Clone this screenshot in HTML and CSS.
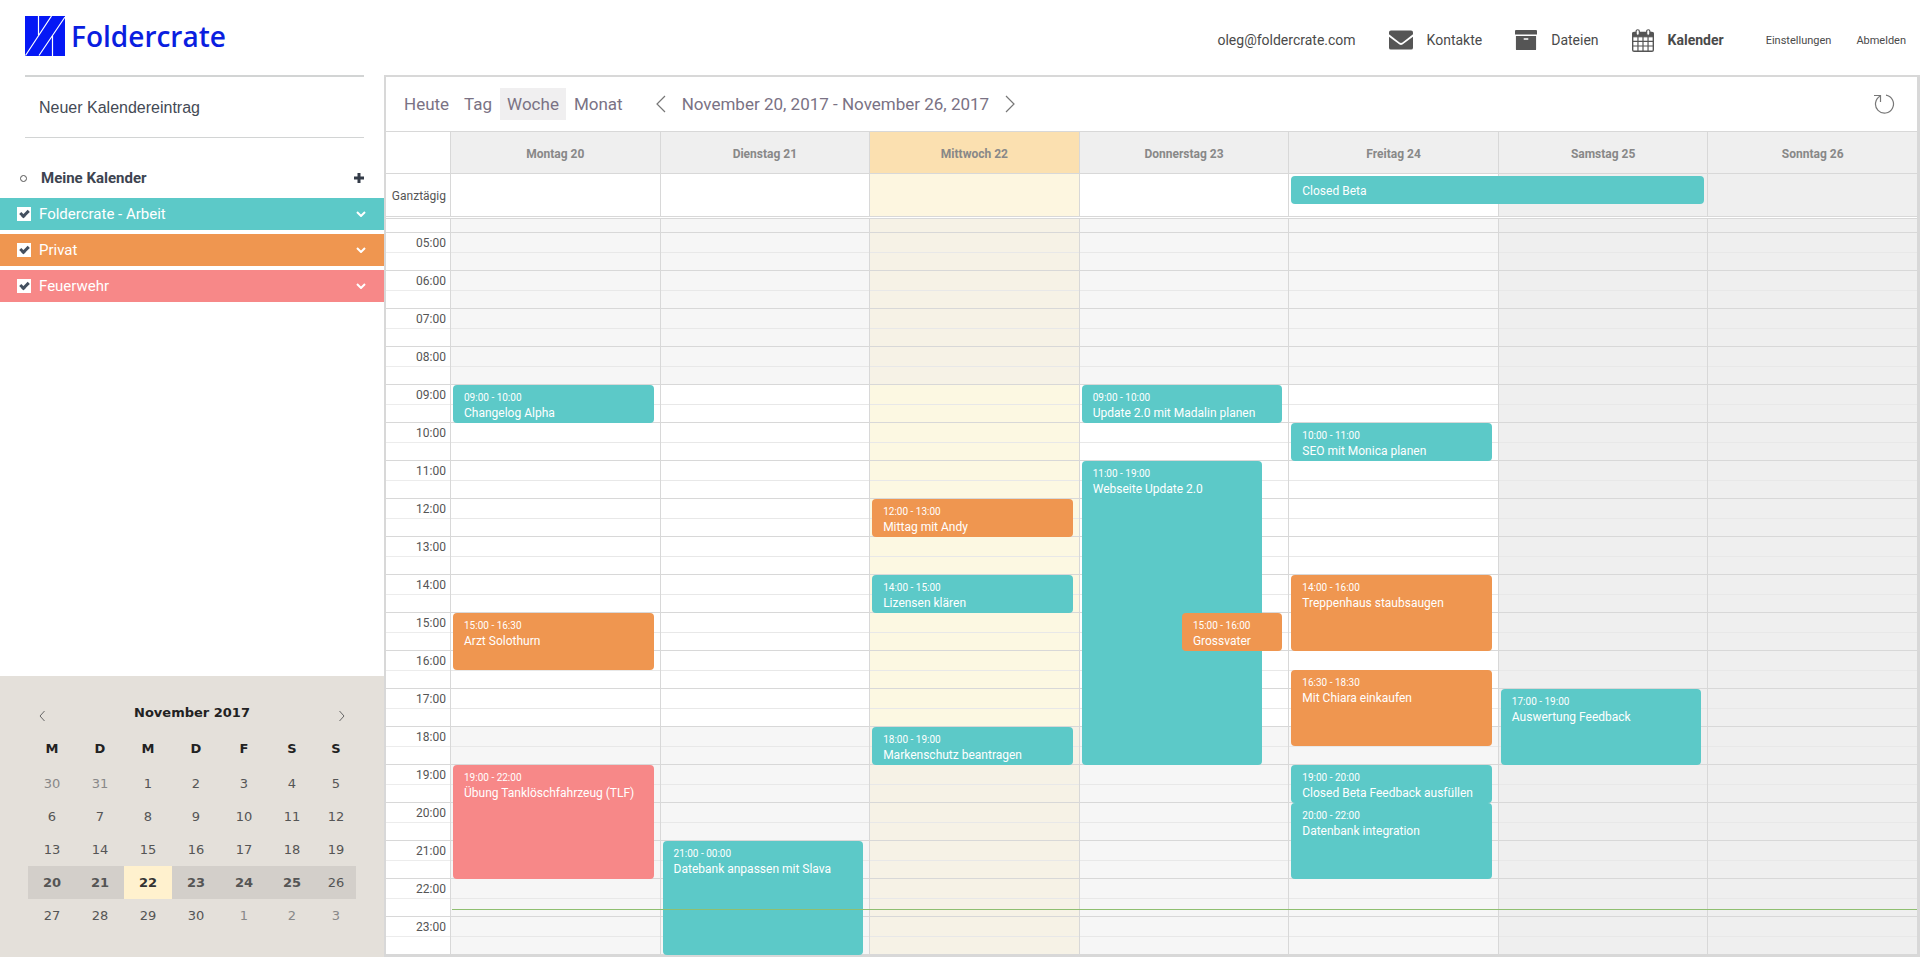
FILE: index.html
```
<!DOCTYPE html>
<html lang="de">
<head>
    <meta charset="UTF-8">
    <meta name="viewport" content="width=device-width, initial-scale=1.0">
    <title>Foldercrate - Kalender</title>
    <link rel="stylesheet" href="styles.css">
</head>
<body>
    <header class="topbar">
        <a class="logo" href="#">
            <svg width="40" height="40" viewBox="0 0 40 40">
                <rect width="40" height="40" fill="#0518f5"/>
                <path d="M13.5 0V19M27.5 20V40M0.500 39.500L26.500 0M14 39.500L40 1" stroke="#fff" stroke-width="1.200" fill="none"/>
            </svg>
            <span>Foldercrate</span>
        </a>
        <nav class="topnav">
            <span class="account">oleg@foldercrate.com</span>
            <a class="nav-link" href="#">
                <svg width="24" height="20" viewBox="0 0 25 20" fill="#555">
                    <path d="M2 0H23Q25 0 25 2V4L14 12.500Q12.500 13.500 11 12.500L0 4V2Q0 0 2 0Z"/>
                    <path d="M0 6.500L11 14.800Q12.500 15.800 14 14.800L25 6.500V18Q25 20 23 20H2Q0 20 0 18Z"/>
                </svg>
                Kontakte
            </a>
            <a class="nav-link" href="#">
                <svg width="22" height="22" viewBox="0 0 24 22" fill="#555">
                    <path d="M1 0H23Q24 0 24 1V5H0V1Q0 0 1 0Z"/>
                    <path fill-rule="evenodd" d="M1 6.500H23V21Q23 22 22 22H2Q1 22 1 21ZM9.500 9V10.800H14.500V9Z"/>
                </svg>
                Dateien
            </a>
            <a class="nav-link active" href="#">
                <svg width="22" height="25" viewBox="0 0 24 25" fill="none" stroke="#555">
                    <rect x="0.750" y="3.750" width="22.500" height="20.500" rx="1.500" stroke-width="1.500"/>
                    <path d="M1 4H23V8.500H1Z" fill="#555"/>
                    <path d="M1 13.500H23M1 18.500H23M6.500 8V24M12 8V24M17.500 8V24" stroke-width="1.300"/>
                    <rect x="4.500" y="0.750" width="3.500" height="6" rx="1.700" fill="#fff" stroke-width="1.300"/>
                    <rect x="16" y="0.750" width="3.500" height="6" rx="1.700" fill="#fff" stroke-width="1.300"/>
                </svg>
                Kalender
            </a>
            <a class="nav-small" href="#">Einstellungen</a>
            <a class="nav-small" href="#">Abmelden</a>
        </nav>
    </header>

    <div class="layout">
        <aside class="sidebar">
            <div class="new-entry">
                <button class="new-btn" type="button">Neuer Kalendereintrag</button>
            </div>
            <div class="group-head">
                <span class="group-dot"></span>
                <h2>Meine Kalender</h2>
                <button class="add-btn" type="button" aria-label="Kalender hinzufügen">
                    <svg width="10" height="10" viewBox="0 0 10 10" stroke="#333b48" stroke-width="3"><path d="M5 0V10M0 5H10"/></svg>
                </button>
            </div>
            <ul class="calendars">
                <li class="teal">
                    <label><input type="checkbox" checked>Foldercrate - Arbeit</label>
                    <svg width="10" height="6" viewBox="0 0 10 6"><path d="M1 1L5 5L9 1"/></svg>
                </li>
                <li class="orange">
                    <label><input type="checkbox" checked>Privat</label>
                    <svg width="10" height="6" viewBox="0 0 10 6"><path d="M1 1L5 5L9 1"/></svg>
                </li>
                <li class="red">
                    <label><input type="checkbox" checked>Feuerwehr</label>
                    <svg width="10" height="6" viewBox="0 0 10 6"><path d="M1 1L5 5L9 1"/></svg>
                </li>
            </ul>

            <div class="minical">
                <div class="minical-head">
                    <button type="button" aria-label="Voriger Monat">
                        <svg width="6" height="12" viewBox="0 0 6 12"><path d="M5.500 1L1 6L5.500 11"/></svg>
                    </button>
                    <span>November 2017</span>
                    <button type="button" aria-label="Nächster Monat">
                        <svg width="6" height="12" viewBox="0 0 6 12"><path d="M0.500 1L5 6L0.500 11"/></svg>
                    </button>
                </div>
                <table>
                    <thead>
                        <tr><th>M</th><th>D</th><th>M</th><th>D</th><th>F</th><th>S</th><th>S</th></tr>
                    </thead>
                    <tbody>
                        <tr><td class="other">30</td><td class="other">31</td><td>1</td><td>2</td><td>3</td><td>4</td><td>5</td></tr>
                        <tr><td>6</td><td>7</td><td>8</td><td>9</td><td>10</td><td>11</td><td>12</td></tr>
                        <tr><td>13</td><td>14</td><td>15</td><td>16</td><td>17</td><td>18</td><td>19</td></tr>
                        <tr class="current"><td class="busy">20</td><td class="busy">21</td><td class="today">22</td><td class="busy">23</td><td class="busy">24</td><td class="busy">25</td><td>26</td></tr>
                        <tr><td>27</td><td>28</td><td>29</td><td>30</td><td class="other">1</td><td class="other">2</td><td class="other">3</td></tr>
                    </tbody>
                </table>
            </div>
        </aside>

        <main class="calendar">
            <div class="toolbar">
                <div class="views">
                    <button type="button">Heute</button>
                    <button type="button">Tag</button>
                    <button type="button" class="selected">Woche</button>
                    <button type="button">Monat</button>
                </div>
                <div class="range">
                    <button type="button" aria-label="Vorige Woche">
                        <svg width="10" height="18" viewBox="0 0 10 18"><path d="M9 1L1 9L9 17"/></svg>
                    </button>
                    <span>November 20, 2017 - November 26, 2017</span>
                    <button type="button" aria-label="Nächste Woche">
                        <svg width="10" height="18" viewBox="0 0 10 18"><path d="M1 1L9 9L1 17"/></svg>
                    </button>
                </div>
                <button type="button" class="reload" aria-label="Aktualisieren">
                    <svg width="22" height="20" viewBox="0 0 22 20"><path d="M1 1.500H7.500V8M7.500 2A9 9 0 1 0 13 1.200"/></svg>
                </button>
            </div>

            <div class="week-row day-names">
                <div class="gutter"></div>
                <div class="day">Montag 20</div>
                <div class="day">Dienstag 21</div>
                <div class="day today">Mittwoch 22</div>
                <div class="day">Donnerstag 23</div>
                <div class="day">Freitag 24</div>
                <div class="day">Samstag 25</div>
                <div class="day">Sonntag 26</div>
            </div>

            <div class="week-row all-day">
                <div class="gutter">Ganztägig</div>
                <div class="day"></div>
                <div class="day"></div>
                <div class="day today"></div>
                <div class="day"></div>
                <div class="day"><div class="event span-two teal">Closed Beta</div></div>
                <div class="day weekend"></div>
                <div class="day weekend"></div>
            </div>

            <div class="week-row hours">
                <div class="gutter">
                    <span>05:00</span><span>06:00</span><span>07:00</span><span>08:00</span><span>09:00</span>
                    <span>10:00</span><span>11:00</span><span>12:00</span><span>13:00</span><span>14:00</span>
                    <span>15:00</span><span>16:00</span><span>17:00</span><span>18:00</span><span>19:00</span>
                    <span>20:00</span><span>21:00</span><span>22:00</span><span>23:00</span>
                </div>
                <!-- grid rows are half hours, row 1 starts at 05:00 -->
                <div class="day">
                    <div class="event teal" style="grid-row: 9 / 11"><time>09:00 - 10:00</time>Changelog Alpha</div>
                    <div class="event orange" style="grid-row: 21 / 24"><time>15:00 - 16:30</time>Arzt Solothurn</div>
                    <div class="event red" style="grid-row: 29 / 35"><time>19:00 - 22:00</time>Übung Tanklöschfahrzeug (TLF)</div>
                </div>
                <div class="day">
                    <div class="event teal" style="grid-row: 33 / 39"><time>21:00 - 00:00</time>Datebank anpassen mit Slava</div>
                </div>
                <div class="day today">
                    <div class="event orange" style="grid-row: 15 / 17"><time>12:00 - 13:00</time>Mittag mit Andy</div>
                    <div class="event teal" style="grid-row: 19 / 21"><time>14:00 - 15:00</time>Lizensen klären</div>
                    <div class="event teal" style="grid-row: 27 / 29"><time>18:00 - 19:00</time>Markenschutz beantragen</div>
                </div>
                <div class="day">
                    <div class="event teal" style="grid-row: 9 / 11"><time>09:00 - 10:00</time>Update 2.0 mit Madalin planen</div>
                    <div class="event teal behind" style="grid-row: 13 / 29"><time>11:00 - 19:00</time>Webseite Update 2.0</div>
                    <div class="event orange front" style="grid-row: 21 / 23"><time>15:00 - 16:00</time>Grossvater</div>
                </div>
                <div class="day">
                    <div class="event teal" style="grid-row: 11 / 13"><time>10:00 - 11:00</time>SEO mit Monica planen</div>
                    <div class="event orange" style="grid-row: 19 / 23"><time>14:00 - 16:00</time>Treppenhaus staubsaugen</div>
                    <div class="event orange" style="grid-row: 24 / 28"><time>16:30 - 18:30</time>Mit Chiara einkaufen</div>
                    <div class="event teal" style="grid-row: 29 / 31"><time>19:00 - 20:00</time>Closed Beta Feedback ausfüllen</div>
                    <div class="event teal" style="grid-row: 31 / 35"><time>20:00 - 22:00</time>Datenbank integration</div>
                </div>
                <div class="day weekend">
                    <div class="event teal" style="grid-row: 25 / 29"><time>17:00 - 19:00</time>Auswertung Feedback</div>
                </div>
                <div class="day weekend"></div>
                <div class="now-line"></div>
            </div>
        </main>
    </div>
</body>
</html>
```

FILE: styles.css
```
*,
*::before {
    box-sizing: border-box;
    margin: 0;
    padding: 0;
}

body {
    font-family: Roboto, sans-serif;
    font-size: 14px;
    color: #3d4450;
    background-color: #fff;
    min-height: 100vh;
    display: flex;
    flex-direction: column;
}

a {
    color: inherit;
    text-decoration: none;
}

button {
    font: inherit;
    color: inherit;
    background: none;
    border: none;
    cursor: pointer;
}

svg {
    display: block;
    flex: none;
}

.teal {
    background-color: #5cc9c8;
}

.orange {
    background-color: #ef9650;
}

.red {
    background-color: #f78888;
}

/* Top bar */

.topbar {
    height: 75px;
    display: flex;
    justify-content: space-between;
    padding: 16px 14px 0 25px;
}

.logo {
    display: flex;
    align-items: center;
    gap: 6px;
    height: 40px;
    font-family: "Open Sans", "Noto Sans", sans-serif;
    font-size: 28px;
    font-weight: 600;
    color: #0a1ee0;
}

.topnav {
    display: flex;
    align-items: center;
    height: 48px;
    color: #4a4a4a;
}

.account {
    margin-right: 33px;
}

.nav-link {
    display: flex;
    align-items: center;
    gap: 14px;
    margin-right: 33px;
}

.nav-link.active {
    font-weight: 700;
    margin-right: 42px;
}

.nav-small {
    font-size: 11px;
    margin-right: 25px;
}

.nav-small:last-child {
    margin-right: 0;
}

/* Sidebar */

.layout {
    flex: 1;
    display: flex;
}

.sidebar {
    flex: 0 0 384px;
    display: flex;
    flex-direction: column;
}

.new-entry {
    margin: 0 20px 0 25px;
    border-top: 2px solid #d2d4d4;
    border-bottom: 1px solid #d2d4d4;
    height: 63px;
    display: flex;
    align-items: center;
}

.new-btn {
    padding: 2px 0 0 14px;
    font-family: "Liberation Sans", sans-serif;
    font-size: 16px;
    color: #444a55;
}

.group-head {
    display: flex;
    align-items: center;
    height: 32px;
    margin: 24px 20px 4px 20px;
}

.group-head h2 {
    font-size: 15px;
    font-weight: 700;
    flex: 1;
}

.group-dot {
    width: 7px;
    height: 7px;
    border: 1px solid #555;
    border-radius: 50%;
    margin-right: 14px;
}

.calendars {
    list-style: none;
    display: flex;
    flex-direction: column;
    gap: 4px;
}

.calendars li {
    display: flex;
    align-items: center;
    justify-content: space-between;
    height: 32px;
    padding: 0 18px 0 17px;
}

.calendars label {
    display: flex;
    align-items: center;
    gap: 8px;
    font-size: 15px;
    color: #fff;
}

.calendars svg {
    fill: none;
    stroke: #fff;
    stroke-width: 2;
}

.calendars input {
    appearance: none;
    width: 14px;
    height: 14px;
    background-color: #fff;
    display: flex;
    align-items: center;
    justify-content: center;
}

.calendars input:checked::before {
    content: "";
    width: 9px;
    height: 6px;
    border-left: 3px solid #445060;
    border-bottom: 3px solid #445060;
    transform: translateY(-1px) rotate(-45deg);
}

/* Month overview */

.minical {
    margin-top: auto;
    padding: 26px 28px 25px;
    background-color: #e4e0da;
    font-family: "DejaVu Sans", sans-serif;
    font-size: 13px;
}

.minical-head {
    display: flex;
    align-items: center;
    justify-content: space-between;
    height: 27px;
    padding: 0 11px;
    font-weight: 700;
    color: #222;
}

.minical-head span {
    align-self: flex-start;
    line-height: 21px;
}

.minical-head svg {
    fill: none;
    stroke: #666;
}

.minical table {
    width: 100%;
    table-layout: fixed;
    border-collapse: collapse;
    text-align: center;
    color: #555;
}

.minical th {
    width: 48px;
    height: 38px;
    color: #222;
}

.minical th:last-child {
    width: auto;
}

.minical td {
    height: 33px;
}

.minical .other {
    color: #888;
}

.minical .current {
    background-color: #d3cfca;
}

.minical .busy {
    font-weight: 700;
}

.minical .today {
    font-weight: 700;
    color: #333;
    background-color: #fff1ce;
}

/* Week view */

.calendar {
    flex: 1;
    min-width: 0;
    border: solid #d8d8d8;
    border-width: 2px 3px 3px 2px;
}

.toolbar {
    display: flex;
    align-items: center;
    height: 54px;
    padding: 0 22px 0 11px;
    font-size: 17px;
    color: #7a7284;
}

.views button {
    height: 32px;
    padding: 0 7px;
}

.views {
    display: flex;
    gap: 1px;
}

.views .selected {
    background-color: #f0eff0;
}

.range {
    display: flex;
    align-items: center;
    gap: 16px;
    margin-left: 26px;
}

.range svg,
.reload svg {
    fill: none;
    stroke: #777;
    stroke-width: 1.2;
}

.reload {
    margin-left: auto;
}

.week-row {
    display: grid;
    grid-template-columns: 64px repeat(7, minmax(0, 1fr));
    border-top: 1px solid #d8d8d8;
}

.week-row .day {
    border-left: 1px solid #d8d8d8;
}

.day-names .day {
    height: 41px;
    padding-top: 2px;
    display: flex;
    align-items: center;
    justify-content: center;
    font-size: 12px;
    font-weight: 700;
    color: #888;
    background-color: #efefef;
}

.day-names .today {
    background-color: #fbe0b0;
}

.all-day {
    height: 46px;
    border-bottom: 3px double #d8d8d8;
}

.all-day .gutter {
    display: flex;
    align-items: center;
    justify-content: flex-end;
    padding: 2px 4px 0 0;
    font-size: 12px;
    color: #555;
}

.all-day .today {
    background-color: #fdf6e0;
}

.all-day .weekend {
    background-color: #efefef;
}

.event {
    margin: 1px 6px -1px 2px;
    padding: 5px 0 0 11px;
    border-radius: 4px;
    font-size: 12px;
    line-height: 16px;
    color: #fff;
    white-space: nowrap;
    overflow: hidden;
    z-index: 1;
}

.event time {
    display: block;
    font-size: 10px;
    line-height: 15px;
}

.all-day .span-two {
    position: relative;
    width: calc(200% - 4px);
    height: 28px;
    margin-top: 2px;
    line-height: 20px;
}

.hours {
    --shade: #f6f6f6;
    --open: #fff;
    position: relative;
    border-top: none;
}

.hours .gutter,
.hours .day {
    padding-top: 13px;
}

.hours .gutter {
    display: flex;
    flex-direction: column;
    background-image:
        repeating-linear-gradient(#d8d8d8 0 1px, transparent 1px 20px, #ececec 20px 21px, transparent 21px 38px);
    background-position: 0 13px;
    background-repeat: no-repeat;
}

.hours .gutter span {
    height: 38px;
    padding: 4px 4px 0 0;
    font-size: 12px;
    text-align: right;
    color: #555;
}

/* lines on top, opening hours 09:00 - 18:00 below */
.hours .day {
    display: grid;
    grid-template-rows: repeat(38, 19px);
    background-image:
        repeating-linear-gradient(#d8d8d8 0 1px, transparent 1px 20px, #e8e8e8 20px 21px, transparent 21px 38px),
        linear-gradient(var(--shade) 165px, var(--open) 165px 507px, var(--shade) 507px);
    background-position: 0 13px, 0 0;
    background-repeat: no-repeat;
}

.hours .day > .event {
    grid-column: 1;
}

.hours .today {
    --shade: #f6f2e6;
    --open: #fcf8e2;
}

.hours .weekend {
    --shade: #efefef;
    --open: #efefef;
}

.hours .behind {
    margin-right: 26px;
}

.hours .front {
    margin-left: 49%;
}

.now-line {
    position: absolute;
    left: 66px;
    right: 0;
    bottom: 44px;
    height: 1px;
    background-color: #8fbf70;
    z-index: 2;
}
```
